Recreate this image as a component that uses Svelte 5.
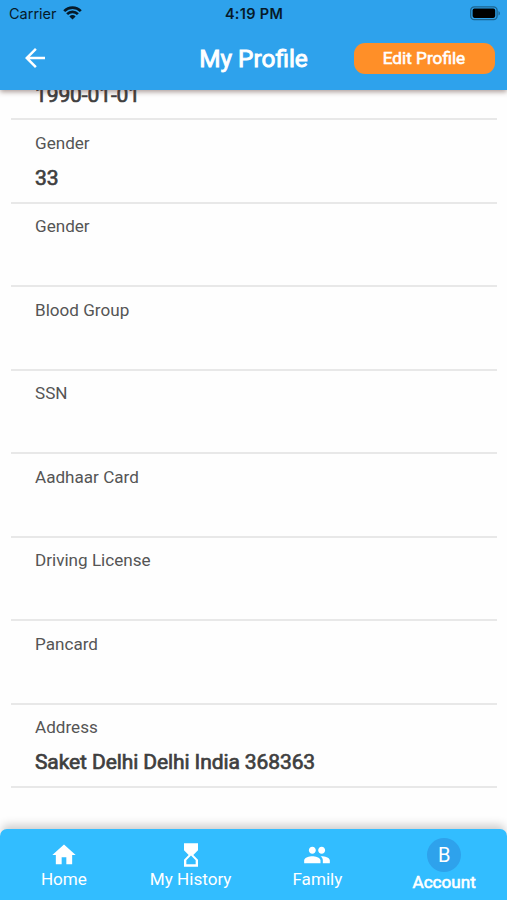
<script>
    // the first row is scrolled under the header, only its value peeks out
    let fields = [
        { label: '', value: '1990-01-01' },
        { label: 'Gender', value: '33' },
        { label: 'Gender', value: '' },
        { label: 'Blood Group', value: '' },
        { label: 'SSN', value: '' },
        { label: 'Aadhaar Card', value: '' },
        { label: 'Driving License', value: '' },
        { label: 'Pancard', value: '' },
        { label: 'Address', value: 'Saket Delhi Delhi India 368363' }
    ]

    let tabs = [
        { name: 'Home', icon: 'M10 20v-6h4v6h5v-8h3L12 3 2 12h3v8z' },
        { name: 'My History', icon: 'M6 2v6h.01L6 8.01 10 12l-4 4 .01.01H6V22h12v-5.99h-.01L18 16l-4-4 4-3.99-.01-.01H18V2H6zm10 14.5V20H8v-3.5l4-4 4 4z' },
        { name: 'Family', icon: 'M16 11c1.66 0 2.99-1.34 2.99-3S17.66 5 16 5c-1.66 0-3 1.34-3 3s1.34 3 3 3zm-8 0c1.66 0 2.99-1.34 2.99-3S9.66 5 8 5C6.34 5 5 6.34 5 8s1.34 3 3 3zm0 2c-2.33 0-7 1.17-7 3.5V19h14v-2.5c0-2.33-4.67-3.5-7-3.5zm8 0c-.29 0-.62.02-.97.05 1.16.84 1.97 1.97 1.97 3.45V19h6v-2.5c0-2.33-4.67-3.5-7-3.5z' },
        { name: 'Account', initial: 'B' }
    ]
    let active = 'Account'
</script>

<div class="screen">
    <header>
        <div class="status">
            <div class="carrier">
                <span>Carrier</span>
                <svg width="19" height="14" viewBox="0 0 19 14">
                    <path d="M1.2 5.1a11.7 11.7 0 0 1 16.6 0M4.1 8.1a7.7 7.7 0 0 1 10.8 0" fill="none" stroke="#061a29" stroke-width="2.7" />
                    <path d="M6.4 10.4a4.4 4.4 0 0 1 6.2 0L9.5 13.6z" fill="#061a29" />
                </svg>
            </div>
            <div class="time">4:19 PM</div>
            <div class="battery">
                <svg width="31" height="15" viewBox="0 0 31 15">
                    <rect x="0.7" y="0.8" width="26.4" height="12.9" rx="3.6" fill="none" stroke="#1c648f" stroke-width="1.3" />
                    <rect x="2.6" y="2.6" width="22.6" height="9.3" rx="1.8" fill="#000" />
                    <path d="M28.5 5v4.6c1.9-.8 1.9-3.8 0-4.6z" fill="#1c648f" />
                </svg>
            </div>
        </div>
        <div class="bar">
            <button class="back" aria-label="Back">
                <svg width="30" height="30" viewBox="0 0 24 24">
                    <path d="M20 11H7.83l5.59-5.59L12 4l-8 8 8 8 1.41-1.41L7.83 13H20v-2z" fill="#fff" />
                </svg>
            </button>
            <h1>My Profile</h1>
            <button class="edit">Edit Profile</button>
        </div>
    </header>

    <main>
        <div class="list">
            {#each fields as field}
                <div class="field">
                    <div class="label">{field.label}</div>
                    <div class="value">{field.value}</div>
                </div>
            {/each}
        </div>
    </main>

    <nav>
        {#each tabs as tab}
            <button class="tab" class:active={tab.name == active}>
                {#if tab.icon}
                    <svg width="28" height="28" viewBox="0 0 24 24"><path d={tab.icon} fill="#fff" /></svg>
                {:else}
                    <span class="avatar">{tab.initial}</span>
                {/if}
                <span class="name">{tab.name}</span>
            </button>
        {/each}
    </nav>
</div>

<style>
    :global(body) {
        margin: 0;
        background: #fefefe;
    }
    button {
        border: none;
        padding: 0;
        background: none;
        color: #fff;
        font-family: inherit;
    }
    svg {
        display: block;
    }
    .screen {
        display: flex;
        flex-direction: column;
        height: 900px;
        overflow: hidden;
        font-family: Roboto, sans-serif;
        background: #fefefe;
    }
    header {
        z-index: 1;
        flex: none;
        height: 90px;
        background: #2ea2ec;
        box-shadow: 0 2px 5px rgba(70, 40, 30, 0.45);
    }
    .status {
        display: grid;
        grid-template-columns: 1fr auto 1fr;
        align-items: center;
        height: 27px;
        padding: 0 6px 0 9px;
        font-family: Inter, sans-serif;
        font-size: 14.5px;
        color: #061a29;
    }
    .carrier {
        display: flex;
        align-items: center;
        gap: 6px;
    }
    .carrier svg {
        margin-top: -2px;
    }
    .time {
        margin-right: 2px;
        font-weight: 600;
        letter-spacing: 0.3px;
    }
    .battery {
        justify-self: end;
    }
    .bar {
        display: grid;
        grid-template-columns: 1fr auto 1fr;
        align-items: center;
        height: 62px;
        padding: 0 12px;
    }
    .back {
        justify-self: start;
        margin-left: 8px;
    }
    h1 {
        margin: 2px 0 0;
        font-size: 24.4px;
        line-height: 28px;
        font-weight: 400;
        color: #fff;
        -webkit-text-stroke: 0.9px #fff;
    }
    .edit {
        justify-self: end;
        width: 141px;
        height: 31px;
        padding-right: 1px;
        border-radius: 11px;
        background: #ff8f28;
        font-size: 17.2px;
        -webkit-text-stroke: 0.6px #fff;
    }
    main {
        flex: 1;
        min-height: 0;
        overflow: hidden;
    }
    .list {
        margin-top: -53px;
    }
    .field {
        box-sizing: border-box;
        height: 83.45px;
        margin: 0 10px 0 11px;
        padding: 12.5px 24px 0;
        border-bottom: 2px solid #e8e8e8;
    }
    .label {
        height: 20px;
        font-size: 17.1px;
        line-height: 20px;
        color: #555;
    }
    .value {
        margin-top: 13px;
        font-size: 21px;
        line-height: 24px;
        letter-spacing: -0.1px;
        color: #3f3f3f;
        -webkit-text-stroke: 0.7px #3f3f3f;
    }
    nav {
        z-index: 1;
        display: flex;
        flex: none;
        height: 71px;
        border-radius: 7px 7px 0 0;
        background: #32bdff;
        box-shadow: 0 -6px 10px -2px rgba(0, 0, 0, 0.2);
    }
    .tab {
        display: flex;
        flex: 1;
        flex-direction: column;
        align-items: center;
        padding: 12px 0 0 1px;
    }
    .name {
        font-size: 17.1px;
        line-height: 20px;
    }
    .active {
        padding-top: 9px;
    }
    .active .name {
        -webkit-text-stroke: 0.6px #fff;
    }
    .avatar {
        width: 34px;
        height: 34px;
        border-radius: 50%;
        background: #2ea2ec;
        font-size: 20px;
        line-height: 34px;
    }
</style>
